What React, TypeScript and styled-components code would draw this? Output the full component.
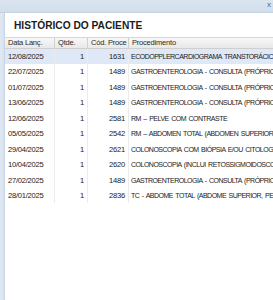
import React from 'react';
import styled, { createGlobalStyle } from 'styled-components';

const GlobalStyle = createGlobalStyle`
  html, body {
    margin: 0;
    padding: 0;
    width: 273px;
    height: 300px;
    overflow: hidden;
    background: #ffffff;
  }
`;

interface Row {
    data: string;
    qtde: number;
    cod: string;
    proc: string;
}

const rows: Row[] = [
    { data: '12/08/2025', qtde: 1, cod: '1631', proc: 'ECODOPPLERCARDIOGRAMA TRANSTORÁCICO COM MAPEAMENTO' },
    { data: '22/07/2025', qtde: 1, cod: '1489', proc: 'GASTROENTEROLOGIA - CONSULTA (PRÓPRIO)' },
    { data: '01/07/2025', qtde: 1, cod: '1489', proc: 'GASTROENTEROLOGIA - CONSULTA (PRÓPRIO)' },
    { data: '13/06/2025', qtde: 1, cod: '1489', proc: 'GASTROENTEROLOGIA - CONSULTA (PRÓPRIO)' },
    { data: '12/06/2025', qtde: 1, cod: '2581', proc: 'RM – PELVE COM CONTRASTE' },
    { data: '05/05/2025', qtde: 1, cod: '2542', proc: 'RM – ABDOMEN TOTAL (ABDOMEN SUPERIOR E PELVE)' },
    { data: '29/04/2025', qtde: 1, cod: '2621', proc: 'COLONOSCOPIA COM BIÓPSIA E/OU CITOLOGIA' },
    { data: '10/04/2025', qtde: 1, cod: '2620', proc: 'COLONOSCOPIA (INCLUI RETOSSIGMOIDOSCOPIA)' },
    { data: '27/02/2025', qtde: 1, cod: '1489', proc: 'GASTROENTEROLOGIA - CONSULTA (PRÓPRIO)' },
    { data: '28/01/2025', qtde: 1, cod: '2836', proc: 'TC - ABDOME TOTAL (ABDOME SUPERIOR, PELVE E RETROPERITÔNIO)' },
];

const Window = styled.div`
  display: flex;
  flex-direction: column;
  width: 273px;
  height: 300px;
  font-family: "Liberation Sans", Arial, sans-serif;
`;

const TitleBar = styled.div`
  height: 13px;
  flex-shrink: 0;
  display: flex;
  justify-content: flex-end;
  align-items: flex-start;
  background: linear-gradient(#dbe5f1, #d2ddeb);
  border-bottom: 1px solid #c4d2e3;
  box-sizing: border-box;
`;

const CloseMark = styled.span`
  font-size: 8px;
  line-height: 10px;
  color: #3a69ad;
  margin-right: 2px;
`;

const Frame = styled.div`
  flex: 1;
  display: flex;
  min-height: 0;
`;

const SideEdge = styled.div`
  width: 5px;
  flex-shrink: 0;
  background: linear-gradient(90deg, #e1e9f3, #d7e2ef);
  border-right: 1px solid #c8d5e4;
  box-sizing: border-box;
`;

const Content = styled.div`
  flex: 1;
  min-width: 0;
  display: flex;
  flex-direction: column;
  background: #ffffff;
  overflow: hidden;
`;

const Heading = styled.div`
  height: 24px;
  padding: 7px 0 0 9px;
  box-sizing: border-box;
  font-size: 10.2px;
  font-weight: bold;
  line-height: 12px;
  color: #1c1c1c;
  white-space: nowrap;
`;

const Grid = styled.div`
  display: flex;
  flex-direction: column;
  width: 600px;
  margin-left: -1px;
`;

const columns = '50px 33px 41px 1fr';

const HeaderRow = styled.div`
  display: grid;
  grid-template-columns: ${columns};
  height: 12px;
  box-sizing: border-box;
  background: linear-gradient(#f7f7f7, #e8e8e8);
  border-top: 1px solid #d6d6d6;
  border-bottom: 1px solid #cfcfcf;
  border-left: 1px solid #cfcfcf;
`;

const HeaderCell = styled.div`
  font-size: 7.5px;
  letter-spacing: -0.2px;
  line-height: 10px;
  color: #2b2b2b;
  padding-left: 3px;
  border-right: 1px solid #d0d0d0;
  white-space: nowrap;
  overflow: hidden;
`;

const BodyRow = styled.div<{ selected?: boolean }>`
  display: grid;
  grid-template-columns: ${columns};
  height: 15.45px;
  background: ${props => (props.selected ? '#dfe8f6' : '#ffffff')};
  border-left: 1px solid #e4e4e4;
`;

const Cell = styled.div<{ align?: 'left' | 'right' }>`
  font-size: 7.6px;
  letter-spacing: -0.25px;
  line-height: 15.45px;
  color: #222222;
  text-align: ${props => props.align ?? 'left'};
  padding: 0 3px;
  border-right: 1px solid #ececec;
  white-space: nowrap;
  overflow: hidden;
`;

const ProcCell = styled(Cell)`
  font-size: 7px;
  letter-spacing: -0.5px;
  word-spacing: 1px;
  padding-left: 2px;
  overflow: visible;
  border-right: none;
`;

export default function App() {
    return (
        <>
            <GlobalStyle />
            <Window>
                <TitleBar>
                    <CloseMark>x</CloseMark>
                </TitleBar>
                <Frame>
                    <SideEdge />
                    <Content>
                        <Heading>HISTÓRICO DO PACIENTE</Heading>
                        <Grid>
                            <HeaderRow>
                                <HeaderCell>Data Lanç.</HeaderCell>
                                <HeaderCell>Qtde.</HeaderCell>
                                <HeaderCell>Cód. Proce</HeaderCell>
                                <HeaderCell>Procedimento</HeaderCell>
                            </HeaderRow>
                            {rows.map((r, i) => (
                                <BodyRow key={i} selected={i === 0}>
                                    <Cell>{r.data}</Cell>
                                    <Cell align="right">{r.qtde}</Cell>
                                    <Cell align="right">{r.cod}</Cell>
                                    <ProcCell>{r.proc}</ProcCell>
                                </BodyRow>
                            ))}
                        </Grid>
                    </Content>
                </Frame>
            </Window>
        </>
    );
}
